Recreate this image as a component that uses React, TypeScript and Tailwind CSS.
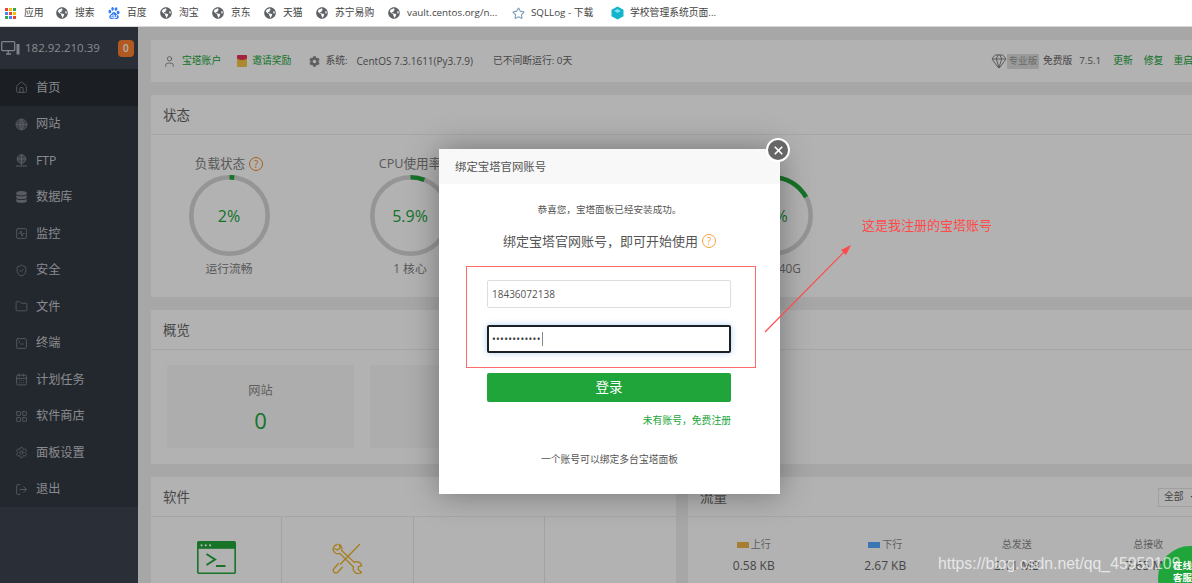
import React from "react";
import {
  Home, ShieldCheck, Folder, SquareTerminal, CalendarDays, Globe, SquareActivity,
  LayoutGrid, Settings, LogOut, User, Gem, Star, X,
} from "lucide-react";
import { FaGlobeAmericas, FaCog, FaDatabase, FaCaretDown } from "react-icons/fa";
import { SiBaidu } from "react-icons/si";

type GlyphProps = { size?: number; className?: string; strokeWidth?: number };

function FtpGlyph({ className }: GlyphProps) {
  return (
    <svg width="13" height="13" viewBox="0 0 13 13" fill="none" stroke="currentColor" strokeWidth="1" className={className}>
      <circle cx="6.5" cy="5" r="4.3" fill="currentColor" fillOpacity="0.5" />
      <path d="M2.2 5h8.6M6.5.7v8.6M6.5 9.5v2M1 12h11" />
    </svg>
  );
}

function DbGlyph({ className }: GlyphProps) {
  return <FaDatabase size={12} className={className} />;
}

function SiteGlyph({ className, size, strokeWidth }: GlyphProps) {
  return <Globe size={size} className={className} strokeWidth={strokeWidth} fill="currentColor" fillOpacity={0.45} />;
}

const menu = [
  { label: "首页", Icon: Home, active: true },
  { label: "网站", Icon: SiteGlyph },
  { label: "FTP", Icon: FtpGlyph },
  { label: "数据库", Icon: DbGlyph },
  { label: "监控", Icon: SquareActivity },
  { label: "安全", Icon: ShieldCheck },
  { label: "文件", Icon: Folder },
  { label: "终端", Icon: SquareTerminal },
  { label: "计划任务", Icon: CalendarDays },
  { label: "软件商店", Icon: LayoutGrid },
  { label: "面板设置", Icon: Settings },
  { label: "退出", Icon: LogOut },
];

function AppsDots() {
  const colors = ["#ea4335", "#fbbc05", "#34a853", "#4285f4", "#ea4335", "#fbbc05", "#34a853", "#4285f4", "#ea4335"];
  return (
    <span className="grid h-[11px] w-[11px] shrink-0 grid-cols-3 gap-[1px]">
      {colors.map((c, i) => (
        <span key={i} style={{ backgroundColor: c }} className="h-[3px] w-[3px]" />
      ))}
    </span>
  );
}

function Cube() {
  return (
    <svg width="13" height="14" viewBox="0 0 13 14" className="shrink-0">
      <path d="M6.5 0.5 12.5 3.8v6.4L6.5 13.5.5 10.2V3.8z" fill="#12b5cb" />
      <path d="M6.5 3 9.8 5 6.5 7 3.2 5z" fill="#7fe3f0" />
    </svg>
  );
}

function Workstation() {
  return (
    <svg width="19" height="14" viewBox="0 0 19 14" fill="none" className="shrink-0 text-[#b8bcc2]">
      <rect x="0.7" y="0.7" width="13" height="9" rx="1" stroke="currentColor" strokeWidth="1.3" />
      <path d="M5 13h5M7.2 10v3" stroke="currentColor" strokeWidth="1.3" />
      <rect x="15.5" y="3" width="3" height="10.5" fill="currentColor" />
    </svg>
  );
}

function Mark({ text, icon, w }: { text: string; icon: React.ReactNode; w: string }) {
  return (
    <div className={`flex shrink-0 items-center ${w}`}>
      <span className="flex w-[19px] shrink-0 items-center justify-start">{icon}</span>
      <span className="whitespace-nowrap">{text}</span>
    </div>
  );
}

function Gauge({ title, pct, value, caption, help }: { title: string; pct: number; value: string; caption: string; help?: boolean }) {
  const r = 38.2;
  const c = 2 * Math.PI * r;
  return (
    <div className="flex w-[90px] shrink-0 flex-col items-center">
      <div className="flex h-[18px] items-center whitespace-nowrap text-[12.6px] text-[#808080]">
        {title}
        {help && <Help className="ml-[4px] border-[#f08a24] text-[#f08a24]" />}
      </div>
      <div className="relative mt-[2px] h-[81px] w-[81px]">
        <svg width="81" height="81" viewBox="0 0 81 81" className="-rotate-90">
          <circle cx="40.5" cy="40.5" r={r} fill="none" stroke="#d6d6d6" strokeWidth="4.6" />
          <circle cx="40.5" cy="40.5" r={r} fill="none" stroke="#20a53a" strokeWidth="4.6" strokeDasharray={`${(c * pct) / 100} ${c}`} />
        </svg>
        <div className="absolute inset-0 flex items-center justify-center whitespace-nowrap text-[16px] text-[#20a53a]">{value}</div>
      </div>
      <div className="mt-[4px] h-[16px] whitespace-nowrap text-[11.8px] text-[#808080]">{caption}</div>
    </div>
  );
}

function Help({ className }: { className: string }) {
  return (
    <span className={`inline-flex h-[14px] w-[14px] shrink-0 items-center justify-center rounded-full border text-[10px] leading-none ${className}`}>
      ?
    </span>
  );
}

function TrafficCell({ label, swatch, value }: { label: string; swatch?: string; value: string }) {
  return (
    <div className="flex flex-col items-center">
      <div className="flex h-[14px] items-center text-[10px] text-[#888]">
        {swatch && <span className={`mr-[2px] h-[6px] w-[12px] ${swatch}`} />}
        {label}
      </div>
      <div className="mt-[5px] whitespace-nowrap text-[12px] text-[#666]">{value}</div>
    </div>
  );
}

function TerminalGlyph() {
  return (
    <svg width="39" height="33" viewBox="0 0 39 33" fill="none">
      <rect x="0.8" y="0.8" width="37.4" height="31.4" rx="1" stroke="#20a53a" strokeWidth="1.6" />
      <rect x="0.8" y="0.8" width="37.4" height="7" fill="#20a53a" />
      <circle cx="4.5" cy="4.3" r="1.1" fill="#fff" />
      <circle cx="8.8" cy="4.3" r="1.1" fill="#fff" />
      <circle cx="13.1" cy="4.3" r="1.1" fill="#fff" />
      <path d="M9.5 13 18 18.5 9.5 24" stroke="#20a53a" strokeWidth="2" />
      <path d="M19 25h9.5" stroke="#20a53a" strokeWidth="2" />
    </svg>
  );
}

function ToolsGlyph() {
  return (
    <svg width="31" height="31" viewBox="0 0 31 31" fill="none" stroke="#f0b429" strokeWidth="1.3" strokeLinecap="round" strokeLinejoin="round">
      <path d="M27.5 1.5 8.5 21" />
      <path d="M6.5 20.5 2 25.5a2.6 2.6 0 0 0 3.7 3.7l4.6-5" />
      <path d="M5 1.5a5 5 0 0 0-3.6 6.3 5 5 0 0 0 6.4 2.6L21.5 24a5 5 0 0 0 1.6 5.5 4.8 4.8 0 0 0 6.4-.3l-3.4-2.6.4-3 3.2-.9a5 5 0 0 0-7.4-3.3L9.6 7.5A5 5 0 0 0 7 1.3L8.2 5 5.6 7 2.8 5.8" />
    </svg>
  );
}

function CardHead({ title }: { title: string }) {
  return (
    <div className="flex h-[40px] items-center border-b border-[#eee] px-[12px] pt-[2px] text-[13.4px] text-[#666]">{title}</div>
  );
}

export default function App() {
  return (
    <div className="relative flex h-[583px] w-[1192px] flex-col overflow-hidden bg-white font-['Open_Sans','Noto_Sans_CJK_SC',sans-serif]">
      {/* Browser bookmarks bar */}
      <div className="flex h-[27px] shrink-0 items-center border-b border-[#d8d8d8] bg-white pl-[5px] text-[9.8px] text-[#444]">
        <Mark w="w-[51px]" text="应用" icon={<AppsDots />} />
        <Mark w="w-[52px]" text="搜索" icon={<FaGlobeAmericas size={12} color="#5f6368" />} />
        <Mark w="w-[52px]" text="百度" icon={<SiBaidu size={12} color="#2f7cf6" />} />
        <Mark w="w-[52px]" text="淘宝" icon={<FaGlobeAmericas size={12} color="#5f6368" />} />
        <Mark w="w-[52px]" text="京东" icon={<FaGlobeAmericas size={12} color="#5f6368" />} />
        <Mark w="w-[52px]" text="天猫" icon={<FaGlobeAmericas size={12} color="#5f6368" />} />
        <Mark w="w-[72px]" text="苏宁易购" icon={<FaGlobeAmericas size={12} color="#5f6368" />} />
        <Mark w="w-[124px]" text="vault.centos.org/n..." icon={<FaGlobeAmericas size={12} color="#5f6368" />} />
        <Mark w="w-[99px]" text="SQLLog - 下载" icon={<Star size={13} color="#7a9cb8" />} />
        <Mark w="w-[110px]" text="学校管理系统页面..." icon={<Cube />} />
      </div>

      <div className="flex min-h-0 flex-1">
        {/* Panel sidebar */}
        <aside className="flex w-[138px] shrink-0 flex-col bg-[#3c424f] text-[#c4c6ca]">
          <div className="flex h-[42px] items-center pl-[1px]">
            <Workstation />
            <span className="ml-[5px] whitespace-nowrap text-[11.5px]">182.92.210.39</span>
            <span className="ml-[18px] flex h-[17px] w-[16px] items-center justify-center rounded-[4px] bg-[#ff8030] text-[10px] font-semibold text-white">0</span>
          </div>
          <nav className="bg-[#333943]">
            {menu.map(({ label, Icon, active }) => (
              <div key={label} className={`flex h-[36.5px] items-center pl-[15px] pt-[1px] text-[12.2px] ${active ? "bg-[#282c33]" : ""}`}>
                <Icon size={13} className="w-[13px] text-[#80858c]" strokeWidth={1.6} />
                <span className="ml-[8px]">{label}</span>
              </div>
            ))}
          </nav>
        </aside>

        {/* Dashboard content, wider than the window */}
        <main className="flex w-[1076px] shrink-0 flex-col gap-[13px] bg-[#f0f0f0] pl-[13px] pt-[13px]">
          <div className="flex h-[42px] w-[1063px] shrink-0 items-center justify-between bg-white pl-[12px] pr-[21px] text-[9.8px] text-[#666]">
            <div className="flex items-center">
              <User size={13} className="text-[#777]" strokeWidth={1.5} />
              <span className="ml-[6px] text-[#20a53a]">宝塔账户</span>
              <svg width="10" height="12" viewBox="0 0 10 12" className="ml-[16px]">
                <rect width="10" height="12" rx="1" fill="#f5c542" />
                <path d="M0 1a1 1 0 0 1 1-1h8a1 1 0 0 1 1 1v2.5Q5 6.5 0 3.5z" fill="#e8335a" />
              </svg>
              <span className="ml-[5px] text-[#20a53a]">邀请奖励</span>
              <FaCog size={11} className="ml-[18px] text-[#888]" />
              <span className="ml-[5px]">系统:</span>
              <span className="ml-[9px] text-[10px]">CentOS 7.3.1611(Py3.7.9)</span>
              <span className="ml-[20px]">已不间断运行: 0天</span>
            </div>
            <div className="flex items-center">
              <Gem size={16} className="text-[#777]" strokeWidth={1.4} />
              <span className="flex h-[15px] w-[32px] items-center justify-center rounded-[1px] bg-[#ddd] text-[9.6px] text-[#999]">专业版</span>
              <span className="ml-[4px]">免费版</span>
              <span className="ml-[7px]">7.5.1</span>
              <span className="ml-[12px] text-[#20a53a]">更新</span>
              <span className="ml-[11px] text-[#20a53a]">修复</span>
              <span className="ml-[10px] text-[#20a53a]">重启</span>
            </div>
          </div>

          <section className="h-[202px] w-[1063px] shrink-0 bg-white">
            <CardHead title="状态" />
            <div className="flex gap-[91px] pl-[33px] pt-[20px]">
              <Gauge title="负载状态" pct={2} value="2%" caption="运行流畅" help />
              <Gauge title="CPU使用率" pct={5.9} value="5.9%" caption="1 核心" />
              <Gauge title="" pct={30} value="" caption="" />
              <Gauge title="/" pct={17} value="17%" caption="1.6G / 40G" />
            </div>
          </section>

          <section className="h-[153.5px] w-[1063px] shrink-0 bg-white">
            <CardHead title="概览" />
            <div className="flex gap-[16px] px-[16px] pt-[15px]">
              {[["网站", "0"], ["FTP", "0"], ["数据库", "0"]].map(([name, n]) => (
                <div key={name} className="flex h-[83px] w-[187px] flex-col items-center bg-[#f8f8f8] pt-[17px]">
                  <div className="text-[12.2px] text-[#888]">{name}</div>
                  <div className="mt-[5px] text-[22px] leading-[30px] text-[#20a53a]">{n}</div>
                </div>
              ))}
            </div>
          </section>

          <div className="flex w-[1063px] shrink-0 gap-[12px]">
            <section className="w-[525px] shrink-0 bg-white">
              <CardHead title="软件" />
              <div className="grid h-[80px] grid-cols-4 divide-x divide-[#e6e8ee]">
                <div className="flex justify-center pt-[24px]"><TerminalGlyph /></div>
                <div className="flex justify-center pt-[26px]"><ToolsGlyph /></div>
                <div />
                <div />
              </div>
            </section>
            <section className="w-[526px] shrink-0 bg-white">
              <div className="flex h-[40px] items-center justify-between border-b border-[#eee] px-[12px] pt-[2px] text-[13.4px] text-[#666]">
                流量
                <span className="flex h-[19px] w-[44px] items-center border border-[#e6e6e6] pl-[5px] text-[9.8px]">
                  全部
                  <FaCaretDown size={8} className="ml-[5px]" />
                </span>
              </div>
              <div className="grid grid-cols-4 pt-[21px]">
                <TrafficCell label="上行" swatch="bg-[#f0b24a]" value="0.58 KB" />
                <TrafficCell label="下行" swatch="bg-[#52a9ff]" value="2.67 KB" />
                <TrafficCell label="总发送" value="2.11 MB" />
                <TrafficCell label="总接收" value="7.65 MB" />
              </div>
            </section>
          </div>
        </main>
      </div>

      {/* Dimming layer under the bind-account dialog */}
      <div className="absolute inset-x-0 bottom-0 top-[27px] bg-black/30" />

      <div className="absolute left-[439px] top-[149px] flex h-[345px] w-[341px] flex-col bg-white shadow-[0_0_30px_rgba(0,0,0,0.35)]">
        <div className="flex h-[35px] shrink-0 items-center bg-[#f8f8f8] pl-[16px] text-[11.4px] text-[#555]">绑定宝塔官网账号</div>
        <div className="mt-[19px] text-center text-[9.6px] leading-[14px] text-[#555]">恭喜您，宝塔面板已经安装成功。</div>
        <div className="mt-[15px] flex items-center justify-center text-[13px] leading-[18px] text-[#555]">
          绑定宝塔官网账号，即可开始使用
          <Help className="ml-[4px] border-[#f5a33c] text-[#f5a33c]" />
        </div>
        <div className="ml-[48px] mr-[49px] mt-[30px] flex h-[28px] items-center rounded-[2px] border border-[#ddd] pl-[4px] text-[10px] text-[#555]">18436072138</div>
        <div className="ml-[48px] mr-[49px] mt-[17px] flex h-[28px] items-center rounded-[2px] border-2 border-[#1c1f24] pl-[3px] text-[10px] tracking-[0.3px] text-[#333] shadow-[0_0_6px_rgba(80,150,230,0.45)]">
          ••••••••••••
          <span className="ml-[1px] h-[14px] w-px bg-[#888]" />
        </div>
        <button className="ml-[48px] mr-[49px] mt-[20px] flex h-[29px] shrink-0 items-center justify-center rounded-[2px] bg-[#20a53a] text-[13.5px] text-white">登录</button>
        <div className="mr-[49px] mt-[12px] text-right text-[9.8px] leading-[14px] text-[#20a53a]">未有账号，免费注册</div>
        <div className="mt-[25px] text-center text-[9.8px] leading-[14px] text-[#555]">一个账号可以绑定多台宝塔面板</div>
      </div>

      {/* Dialog close button */}
      <button className="absolute left-[766px] top-[138px] flex h-[24px] w-[24px] items-center justify-center rounded-full border-2 border-white bg-[#666] text-white">
        <X size={13} strokeWidth={3.2} />
      </button>

      {/* Hand-drawn annotation: box, arrow and note */}
      <div className="absolute left-[466px] top-[266px] h-[102px] w-[290px] border border-[#ff6b6b]" />
      <svg className="absolute left-[760px] top-[240px]" width="100" height="100" viewBox="0 0 100 100">
        <path d="M5 92 88 8" stroke="#ff4a4a" strokeWidth="1.1" />
        <path d="M91 5 81 10 86 15z" fill="#ff4a4a" />
      </svg>
      <div className="absolute left-[862px] top-[216px] text-[13px] leading-[18px] text-[#ff4a4a]">这是我注册的宝塔账号</div>

      {/* Floating support button */}
      <div className="absolute left-[1158px] top-[546px] h-[64px] w-[64px] rounded-full bg-[#20a53a] pl-[15px] pt-[14px] text-[9.5px] font-semibold leading-[12px] text-white">
        在线<br />客服
      </div>

      <div className="absolute left-[938px] top-[555px] whitespace-nowrap font-['Liberation_Sans',sans-serif] text-[15.8px] leading-[18px] text-white/70">
        https://blog.csdn.net/qq_45950109
      </div>
    </div>
  );
}
